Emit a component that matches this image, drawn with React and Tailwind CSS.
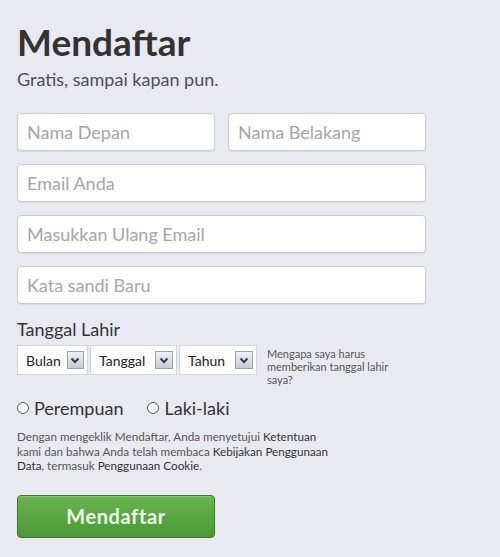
import React from "react";

const Field = ({ placeholder, className = "" }) => (
  <input
    type="text"
    placeholder={placeholder}
    className={
      "h-[38px] rounded-[4px] border border-[#c9cbd2] bg-white px-[9px] text-[18px] text-[#333] placeholder:text-[#a6a6ab] outline-none shadow-[0_1px_1px_rgba(0,0,0,0.06)] " +
      className
    }
  />
);

const Picker = ({ label, className = "" }) => (
  <div
    className={
      "flex h-[30px] items-center gap-[6px] border border-[#d4d5da] bg-white pl-[8px] pr-[3px] text-[14px] text-[#222] " +
      className
    }
  >
    <span className="flex-1">{label}</span>
    <span className="flex h-[18px] w-[18px] items-center justify-center border border-[#9fa3ad] bg-gradient-to-b from-[#eef0f4] to-[#c9ccd4]">
      <svg width="10" height="7" viewBox="0 0 10 7">
        <path d="M1.5 1.5 L5 5 L8.5 1.5" fill="none" stroke="#2d3a5a" strokeWidth="2" />
      </svg>
    </span>
  </div>
);

const Radio = ({ label }) => (
  <label className="flex items-center gap-[5px]">
    <span className="h-[12px] w-[12px] rounded-full border border-[#555] bg-white" />
    <span>{label}</span>
  </label>
);

export default function App() {
  return (
    <div
      className="min-h-[557px] w-[500px] bg-[#e9eaf1] pl-[17px] pt-[20px] text-[#333]"
      style={{ fontFamily: "Lato, 'Open Sans', sans-serif" }}
    >
      <h1 className="text-[37px] font-bold leading-[44px] text-[#333]">Mendaftar</h1>
      <p className="mt-[3px] text-[18px] leading-[24px] text-[#4b4f56]">
        Gratis, sampai kapan pun.
      </p>

      <div className="mt-[22px] flex w-[409px] flex-col gap-[13px]">
        <div className="flex gap-[13px]">
          <Field placeholder="Nama Depan" className="w-[198px]" />
          <Field placeholder="Nama Belakang" className="w-[198px]" />
        </div>
        <Field placeholder="Email Anda" />
        <Field placeholder="Masukkan Ulang Email" />
        <Field placeholder="Kata sandi Baru" />
      </div>

      <div className="mt-[13px] text-[18px] leading-[24px] text-[#333]">Tanggal Lahir</div>
      <div className="mt-[4px] flex items-start gap-[10px]">
        <div className="flex gap-[2px]">
          <Picker label="Bulan" className="w-[71px]" />
          <Picker label="Tanggal" className="w-[87px]" />
          <Picker label="Tahun" className="w-[78px]" />
        </div>
        <p className="mt-[2px] w-[140px] text-[11px] leading-[13px] text-[#555]">
          Mengapa saya harus memberikan tanggal lahir saya?
        </p>
      </div>

      <div className="mt-[10px] flex gap-[24px] text-[18px] leading-[24px] text-[#333]">
        <Radio label="Perempuan" />
        <Radio label="Laki-laki" />
      </div>

      <p className="mt-[9px] w-[340px] text-[11.7px] leading-[14.5px] text-[#555]">
        Dengan mengeklik Mendaftar, Anda menyetujui <span className="text-[#333]">Ketentuan</span>
        <br />
        kami dan bahwa Anda telah membaca <span className="text-[#333]">Kebijakan Penggunaan</span>
        <br />
        <span className="text-[#333]">Data</span>, termasuk{" "}
        <span className="text-[#333]">Penggunaan Cookie</span>.
      </p>

      <button className="mt-[22px] flex h-[43px] w-[198px] items-center justify-center rounded-[4px] border border-[#3b7a2a] bg-gradient-to-b from-[#69b44f] to-[#4b9a36] text-[20px] font-bold tracking-[0.6px] text-[#eef8e6] shadow-[inset_0_1px_0_rgba(255,255,255,0.25)]">
        Mendaftar
      </button>
    </div>
  );
}
